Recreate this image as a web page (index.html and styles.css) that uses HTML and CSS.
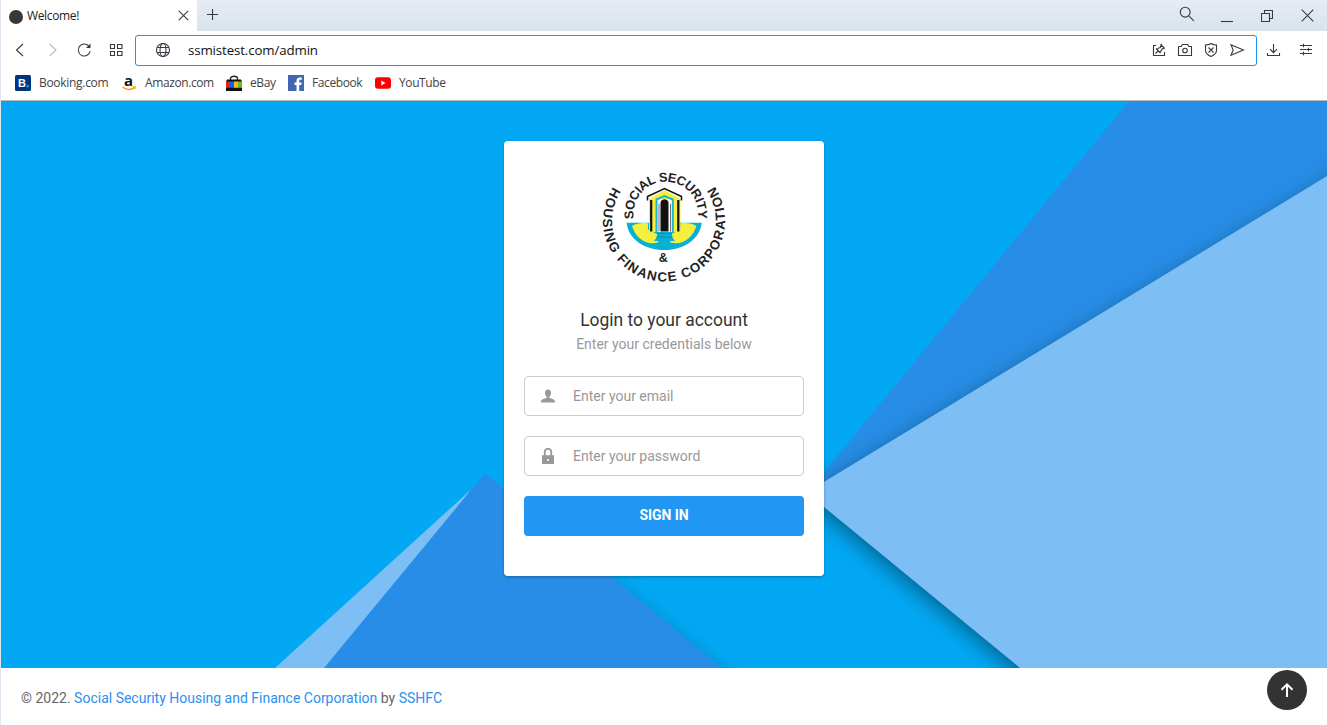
FILE: index.html
```html
<!DOCTYPE html>
<html lang="en">
<head>
<meta charset="utf-8">
<title>Welcome!</title>
<link rel="stylesheet" href="styles.css">
</head>
<body>
<div class="window">
  <header class="tabbar">
    <div class="tab">
      <span class="favicon"></span>
      <span class="tab-title">Welcome!</span>
      <svg class="tab-close" width="11" height="11" viewBox="0 0 11 11"><path d="M.8.8l9.4 9.4M10.200.8L.8 10.200"/></svg>
    </div>
    <svg class="new-tab" width="12" height="12" viewBox="0 0 12 12"><path d="M5.500 0v11M0 5.500h11"/></svg>
    <div class="window-controls">
      <svg width="16" height="16" viewBox="0 0 16 16"><circle cx="6.200" cy="6.200" r="4.900"/><path d="M9.800 9.800l5 5"/></svg>
      <svg width="12" height="16" viewBox="0 0 12 16"><path d="M0 11.500h12"/></svg>
      <svg width="12" height="12" viewBox="0 0 12 12"><path d="M.5 3.500h8v8h-8zM3.500 3.500v-3h8v8h-3"/></svg>
      <svg width="13" height="13" viewBox="0 0 13 13"><path d="M.7.7l11.600 11.600M12.300.7L.7 12.300"/></svg>
    </div>
  </header>

  <div class="toolbar">
    <div class="nav">
      <svg width="16" height="16" viewBox="0 0 16 16"><path d="M11 2L4.500 8l6.500 6"/></svg>
      <svg class="muted" width="16" height="16" viewBox="0 0 16 16"><path d="M5.500 2L12 8l-6.500 6"/></svg>
      <svg width="16" height="16" viewBox="0 0 16 16"><path d="M13.200 4.500A6 6 0 1 0 14.200 9"/><path class="solid" d="M14.500 1.500V6H10z"/></svg>
      <svg width="16" height="16" viewBox="0 0 16 16"><path d="M2.500 2.500h4v4h-4zM9.500 2.500h4.500v4H9.500zM2.500 9.500h4v4h-4zM9.500 9.500h4.500v4H9.500z"/></svg>
    </div>
    <div class="address">
      <svg class="globe" width="16" height="16" viewBox="0 0 16 16"><circle cx="8" cy="8" r="6.500"/><ellipse cx="8" cy="8" rx="3" ry="6.500"/><path d="M2.300 5.500h11.400M2.300 10.500h11.400"/></svg>
      <span class="url">ssmistest.com/admin</span>
      <div class="address-tools">
        <svg width="16" height="16" viewBox="0 0 16 16"><path d="M5 3.500H2.500v10h11V10M4.500 11.500l3-3M5 6.500l4.500 4.500M6.200 7.200c1-1 2-1.200 3-1.700l1-2.500 3 3-2.400 1.200c-.4 1-.8 2-1.700 2.800M9.700 2.500l4 4"/></svg>
        <svg width="16" height="16" viewBox="0 0 16 16"><path d="M1.500 4.500h2.700l1.300-2h5l1.300 2h2.700v9h-13z"/><circle cx="8" cy="8.500" r="2.300"/></svg>
        <svg width="16" height="16" viewBox="0 0 16 16"><path d="M8 1.500c1.700 1.200 3.500 1.500 5.500 1.500v5.500c0 3-2.500 4.700-5.500 6-3-1.300-5.500-3-5.500-6V3C4.500 3 6.300 2.700 8 1.500zM5.500 5.500l5 5M10.500 5.500l-5 5"/></svg>
        <svg width="16" height="16" viewBox="0 0 16 16"><path d="M2 2.800L14.500 8 2 13.200 4.200 8z"/></svg>
      </div>
    </div>
    <div class="browser-tools">
      <svg width="16" height="16" viewBox="0 0 16 16"><path d="M7.500 2v8.500M4 7.200l3.500 3.500L11 7.200M1.500 11v2.500h12V11"/></svg>
      <svg width="16" height="16" viewBox="0 0 16 16"><path d="M2 3.500h12M2 7.500h12M2 11.500h12M5.500 1.800v3.400M10.500 5.800v3.400M5.500 9.800v3.400"/></svg>
    </div>
  </div>

  <nav class="bookmarks">
    <a class="bookmark"><svg width="16" height="16" viewBox="0 0 16 16"><rect width="16" height="16" rx="1.500" fill="#003580"/><text class="booking-b" x="3" y="12">B</text><circle cx="12.700" cy="11.200" r="1.200" fill="#0fa8ea"/></svg><span class="w-booking">Booking.com</span></a>
    <a class="bookmark"><svg width="16" height="16" viewBox="0 0 16 16"><text class="amazon-a" x="3" y="10.500">a</text><path d="M1.500 12c4 3 8.500 3 12 .6" fill="none" stroke="#f90" stroke-width="1.400"/><path d="M11.600 11.800l2.800-.2-.8 2.500" fill="none" stroke="#f90"/></svg><span class="w-amazon">Amazon.com</span></a>
    <a class="bookmark"><svg width="16" height="16" viewBox="0 0 16 16"><path d="M4.500 5V3.500C4.500.5 11.500.5 11.500 3.500V5" fill="none" stroke="#222" stroke-width="1.300"/><path d="M1 4.500h14l1 2.500H0z" fill="#111"/><path d="M0 6.500h4V13H0z" fill="#e62117"/><path d="M4 6.500h4V13H4z" fill="#0968f6"/><path d="M8 6.500h4V13H8z" fill="#ffbd14"/><path d="M12 6.500h4V13h-4z" fill="#79b51c"/><path d="M0 12.800h16V16H0z" fill="#111"/></svg><span class="w-ebay">eBay</span></a>
    <a class="bookmark"><svg width="16" height="16" viewBox="0 0 16 16"><rect width="16" height="16" fill="#4267b2"/><path d="M8.500 16V10H6.500V7.500h2V6c0-2.300 1.300-3.500 3.300-3.500h2v2.300h-1.300c-1 0-1.300.5-1.300 1.300v1.400h2.500l-.4 2.500h-2.100v6z" fill="#fff"/></svg><span class="w-facebook">Facebook</span></a>
    <a class="bookmark"><svg width="16" height="16" viewBox="0 0 16 16"><rect x="0" y="2.300" width="16" height="11.400" rx="3" fill="#f00"/><path d="M6.300 5.600v4.800l4.200-2.400z" fill="#fff"/></svg><span class="w-youtube">YouTube</span></a>
  </nav>

  <main class="page">
    <svg class="backdrop" viewBox="1 101 1326 567" preserveAspectRatio="none">
      <defs><filter id="shade" x="-20%" y="-20%" width="140%" height="140%"><feGaussianBlur stdDeviation="11"/></filter></defs>
      <rect x="1" y="101" width="1326" height="567" fill="#03a8f4"/>
      <path d="M530 520L745 695H520z" fill="#004a60" opacity=".5" filter="url(#shade)"/>
      <path d="M275 668L471 489.500 340 668z" fill="#7dbff5"/>
      <path d="M485 473L722 668H324z" fill="#288de6"/>
      <path d="M1129 101L806 494 1400 494V101z" fill="#288de6"/>
      <path d="M806 499L1350 171V740H1100z" fill="#003b50" opacity=".65" filter="url(#shade)"/>
      <path d="M806.500 492.600L1327 176V668H1020z" fill="#7dbff5"/>
    </svg>
    <form class="card">
      <svg class="logo" width="130" height="120" viewBox="0 0 130 120">
        <defs>
          <path id="arc-inner" d="M34.900 53A32.300 32.300 0 1 1 98.700 53"/>
          <path id="arc-outer" d="M14 21A61 61 0 1 0 116 21"/>
        </defs>
        <text class="logo-text"><textPath href="#arc-inner" textLength="111" lengthAdjust="spacing">SOCIAL SECURITY</textPath></text>
        <text class="logo-text ring"><textPath href="#arc-outer" textLength="263" lengthAdjust="spacing">HOUSING FINANCE CORPORATION</textPath></text>
        <path d="M27.700 56.700H102.700C101 73 85 84 65.200 84S29 73 27.700 56.700z" fill="#0aafd4"/>
        <path d="M33 60c5-3 11-3.500 16-2.500v6l12 6-2 7c-12 3-22-4-26-16.500zM97.400 60c-5-3-11-3.500-16-2.500v6l-12 6 2 7c12 3 22-4 26-16.500z" fill="#f6ef3c"/>
        <path d="M50 33L65.500 24l16 9v33H50z" fill="#f6ef3c"/>
        <path d="M48.500 34.500v-4L65.500 22.500l17 8v4" fill="none" stroke="#111" stroke-width="1.500"/>
        <path d="M52.200 34v31.500M79.300 34v31.500" stroke="#111" stroke-width="2.200"/>
        <path d="M57.500 33h16.500v33H57.500z" fill="#fff"/>
        <path d="M57.500 66V33.500l8-3.500 8.300 3.500V66" fill="none" stroke="#19b5d6" stroke-width="2"/>
        <path d="M61.500 65.500V37c0-5 8-5 8 0v28.500z" fill="#111"/>
        <path d="M60 38v27.500M71.500 38v27.500" stroke="#111" stroke-width=".6"/>
        <path d="M58 66h15v5l3 4H55l3-4z" fill="#0aafd4"/>
        <path d="M58 67.500h15M57 71h17" stroke="#087f9d" stroke-width=".7"/>
        <text class="logo-text ampersand" x="64.300" y="96">&amp;</text>
      </svg>
      <h1 class="title">Login to your account</h1>
      <p class="subtitle">Enter your credentials below</p>
      <label class="field">
        <svg width="16" height="16" viewBox="0 0 16 16"><path d="M8 1.500c2 0 3 1.300 3 3.400 0 1.700-.7 2.900-1.600 3.600v1.400c2.500.4 5.600 1.500 5.600 3.700v.9H1v-.9c0-2.200 3.100-3.300 5.600-3.700V8.500C5.700 7.800 5 6.600 5 4.900 5 2.800 6 1.500 8 1.500z"/></svg>
        <input type="text" placeholder="Enter your email">
      </label>
      <label class="field">
        <svg width="16" height="16" viewBox="0 0 16 16"><path fill-rule="evenodd" d="M2 7.200h1.800V4a4.200 4.200 0 0 1 8.400 0v3.200H14V16H2zM5.700 7.200h4.600V4a2.300 2.300 0 0 0-4.600 0zM7.200 11v2h1.600v-2z"/></svg>
        <input type="password" placeholder="Enter your password">
      </label>
      <button class="submit" type="button">SIGN IN</button>
    </form>
  </main>

  <footer class="footer">
    <p class="copyright">© 2022. <a>Social Security Housing and Finance Corporation</a> by <a>SSHFC</a></p>
    <div class="to-top"><svg width="14" height="16" viewBox="0 0 14 16"><path d="M7 15V2.500M1.500 7.800L7 2.300l5.500 5.500"/></svg></div>
  </footer>
</div>
</body>
</html>
```

FILE: styles.css
```css
* { box-sizing: border-box; }
body { margin: 0; height: 725px; overflow: hidden; font: 14px/20px Roboto, sans-serif; color: #666; }
svg { display: block; flex: none; }
.window { height: 725px; display: flex; flex-direction: column; border-left: 1px solid #dfe6f2; background: #fff; }

.tabbar { height: 31px; display: flex; align-items: center; background: linear-gradient(#e5ecf5, #dae2eb); font: 12px/16px "Noto Sans", sans-serif; }
.tabbar svg, .nav svg, .address svg, .browser-tools svg { fill: none; stroke: #333b44; stroke-width: 1.1; }
.tab { width: 196px; height: 31px; background: #fff; display: flex; align-items: center; padding: 0 8px; }
.favicon { width: 14px; height: 14px; margin-top: 2px; border-radius: 50%; background: #383838; }
.tab-title { margin-left: 4px; font-family: "Open Sans", sans-serif; font-size: 12px; letter-spacing: -.35px; color: #222; flex: 1; }
.new-tab { margin: -1px 0 0 10px; }
.window-controls { margin-left: auto; display: flex; align-items: center; padding: 0 13px 3px 0; }
.window-controls svg:nth-child(1) { margin-right: 26px; }
.window-controls svg:nth-child(2) { margin: 8px 28px 0 0; }
.window-controls svg:nth-child(3) { margin: 3px 28px 0 0; }
.window-controls svg:nth-child(4) { margin-top: 3px; }

.toolbar { height: 39px; display: flex; align-items: center; }
.nav { width: 134px; display: flex; gap: 16px; padding: 0 0 2px 11px; }
.nav .muted { stroke: #bbb; }
.nav .solid { fill: #333b44; stroke: none; }
.address { width: 1122px; height: 31px; margin-bottom: 1px; border: 1px solid #1a94f0; border-radius: 3px; display: flex; align-items: center; padding: 0 11px 1px 19px; }
.url { margin-left: 17px; font: 13.300px/20px "Open Sans", sans-serif; letter-spacing: -.13px; color: #111; }
.address-tools { display: flex; gap: 10px; margin-left: auto; }
.browser-tools { display: flex; gap: 16px; padding: 0 0 2px 9px; }

.bookmarks { height: 31px; border-bottom: 1px solid #b4babd; display: flex; align-items: flex-start; padding: 5px 0 0 14px; font: 12px/16px "Open Sans", sans-serif; letter-spacing: -.4px; color: #444; }
.bookmark { display: flex; gap: 8px; margin-right: 13px; white-space: nowrap; }
.w-booking { width: 69px; letter-spacing: -.3px; }
.w-amazon { width: 68px; }
.w-ebay { width: 25px; }
.w-facebook { width: 50px; }
.booking-b { font: bold 11px "Liberation Sans", sans-serif; letter-spacing: 0; fill: #fff; }
.amazon-a { font: bold 15px/1 "Open Sans", sans-serif; letter-spacing: 0; fill: #111; }
.bookmark svg, .logo { overflow: visible; }

.page { height: 567px; flex: none; display: grid; justify-items: center; align-items: start; overflow: hidden; }
.backdrop { grid-area: 1 / 1; width: 1326px; height: 567px; }
.card { grid-area: 1 / 1; position: relative; width: 320px; height: 435px; margin-top: 40px; padding: 20px; border-radius: 4px; background: #fff; box-shadow: 0 1px 3px rgba(0,0,0,.3); display: flex; flex-direction: column; }
.logo { align-self: center; margin-top: 5px; }
.logo-text { font: bold 12.800px "Liberation Sans", sans-serif; fill: #222; }
.logo-text.ring { font-size: 13.300px; }
.logo-text.ampersand { text-anchor: middle; font-size: 12.500px; }
.title { margin: 22px 0 0; font-size: 17.450px; line-height: 24px; font-weight: 400; color: #333; text-align: center; }
.subtitle { margin: 2px 0 22px; color: #999; text-align: center; }
.field { height: 40px; flex: none; margin-bottom: 20px; border: 1px solid #ccc; border-radius: 4px; display: flex; align-items: center; padding-left: 15px; }
.field svg { fill: #999; }
.field input { flex: 1; min-width: 0; margin: 0 0 0 17px; padding: 0; border: 0; outline: 0; background: none; font: 14px/20px Roboto, sans-serif; }
.field input::placeholder { color: #999; opacity: 1; }
.submit { height: 40px; flex: none; border: 0; border-radius: 4px; padding: 0 0 2px; background: #2196f3; color: #fff; font: 700 14px/20px Roboto, sans-serif; letter-spacing: -.1px; }

.footer { flex: 1; display: flex; justify-content: space-between; align-items: flex-start; padding: 2px 20px 0; }
.copyright { margin: 18px 0 0; }
.copyright a { color: #2b90f0; }
.to-top { width: 40px; height: 40px; border-radius: 50%; background: #333; display: grid; place-items: center; }
.to-top svg { fill: none; stroke: #fff; stroke-width: 2; }
```
